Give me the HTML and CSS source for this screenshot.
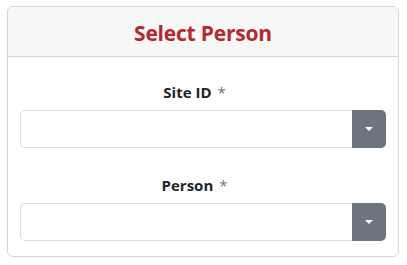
FILE: index.html
```html
<!DOCTYPE html>
<html>
<head>
<meta charset="utf-8">
<link rel="stylesheet" href="styles.css">
</head>
<body>
<div class="card">
  <div class="card-header">
    <h2 class="title">Select Person</h2>
  </div>
  <div class="card-body">
    <div class="field">
      <label class="label">Site ID <span class="req">*</span></label>
      <div class="select">
        <div class="select-box"></div>
        <div class="select-btn"><span class="caret"></span></div>
      </div>
    </div>
    <div class="field">
      <label class="label">Person <span class="req">*</span></label>
      <div class="select">
        <div class="select-box"></div>
        <div class="select-btn"><span class="caret"></span></div>
      </div>
    </div>
  </div>
</div>
</body>
</html>
```
FILE: styles.css
```css
html, body {
  margin: 0;
  padding: 0;
  background: #ffffff;
}
body {
  font-family: "Open Sans", "Noto Sans", sans-serif;
  color: #212529;
}
.card {
  margin: 6px 8px 0 7px;
  border: 1px solid #d6d6d6;
  border-radius: 6px;
  height: 251px;
  box-sizing: border-box;
  display: flex;
  flex-direction: column;
}
.card-header {
  height: 50px;
  box-sizing: border-box;
  background: #f7f7f7;
  border-bottom: 1px solid #d6d6d6;
  border-radius: 6px 6px 0 0;
  display: flex;
  align-items: center;
  justify-content: center;
  padding-top: 2px;
}
.title {
  margin: 0;
  font-size: 21px;
  font-weight: 700;
  color: #b3292e;
  letter-spacing: -0.2px;
}
.card-body {
  padding: 24px 12px 0 12px;
  display: flex;
  flex-direction: column;
  gap: 26px;
}
.field {
  display: flex;
  flex-direction: column;
  align-items: center;
  gap: 7px;
}
.label {
  font-size: 15px;
  font-weight: 700;
  color: #212529;
  line-height: 22px;
  padding-right: 17px;
}
.req {
  font-weight: 400;
  color: #6c757d;
  margin-left: 2px;
}
.select {
  display: flex;
  width: 100%;
  height: 38px;
}
.select-box {
  flex: 1;
  border: 1px solid #dcdde1;
  border-right: none;
  border-radius: 5px 0 0 5px;
  background: #fff;
}
.select-btn {
  width: 34px;
  background: #6c757d;
  border-radius: 0 5px 5px 0;
  display: flex;
  align-items: center;
  justify-content: center;
}
.caret {
  width: 0;
  height: 0;
  border-left: 4px solid transparent;
  border-right: 4px solid transparent;
  border-top: 4px solid #ffffff;
}
```
